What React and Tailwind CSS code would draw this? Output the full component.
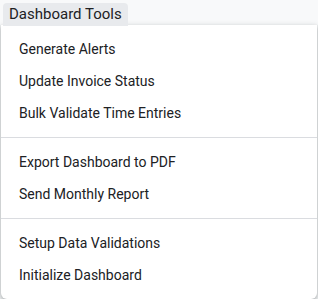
const App = () => {
  const groups = [
    ["Generate Alerts", "Update Invoice Status", "Bulk Validate Time Entries"],
    ["Export Dashboard to PDF", "Send Monthly Report"],
    ["Setup Data Validations", "Initialize Dashboard"],
  ];

  return (
    <div className="h-[299px] w-[318px] bg-[#f1f3f4] font-['Roboto',sans-serif] overflow-hidden">
      {/* toolbar */}
      <div className="h-[25px] bg-[#f8f9fa] pt-[2px] pl-[3px]">
        <div className="inline-flex h-[23px] items-center rounded-t-[4px] bg-[#e8eaed] px-[6px] text-[15px] text-[#202124]">
          Dashboard Tools
        </div>
      </div>

      {/* menu */}
      <div className="ml-[1px] w-[316px] rounded-b-[6px] bg-white py-[8px] shadow-[0_2px_4px_rgba(60,64,67,0.3),0_1px_6px_rgba(60,64,67,0.15)]">
        {groups.map((group, gi) => (
          <div key={gi}>
            {gi > 0 && <div className="my-[8px] h-px bg-[#dadce0]" />}
            {group.map((item) => (
              <div
                key={item}
                className="flex h-[32px] items-center pl-[18px] text-[14px] text-[#202124]"
              >
                {item}
              </div>
            ))}
          </div>
        ))}
      </div>
    </div>
  );
};

export default App;
